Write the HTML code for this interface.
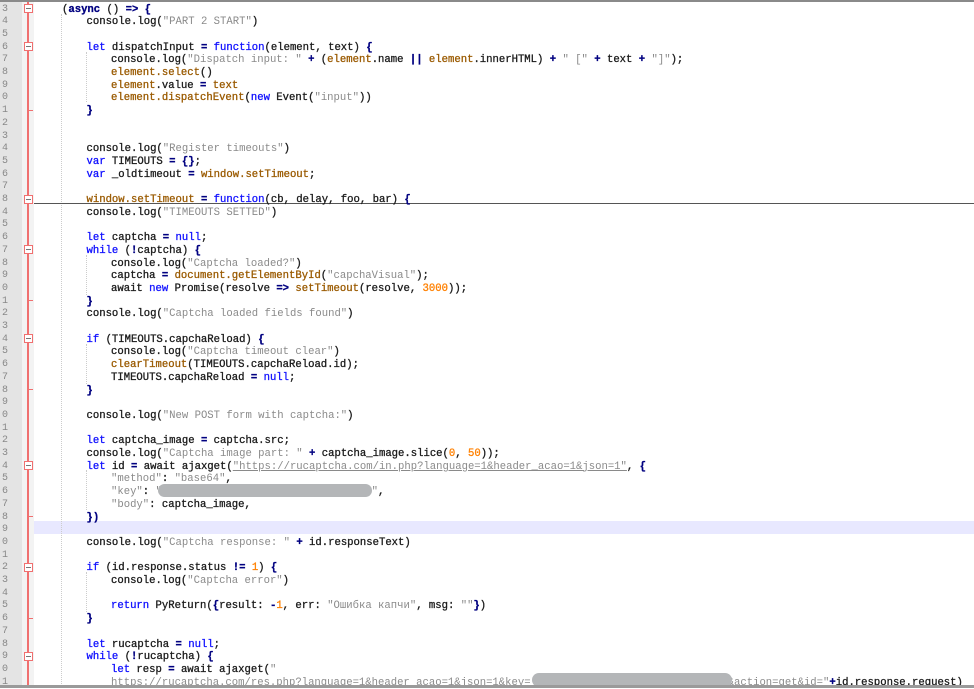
<!DOCTYPE html>
<html><head><meta charset="utf-8"><style>
body{margin:0;width:974px;height:688px;overflow:hidden;background:#fff;position:relative;font-family:"Liberation Mono",monospace;font-size:10.6px;}
#top{position:absolute;left:0;top:0;width:974px;height:2px;background:#8a8a8a}
#bot{position:absolute;left:0;top:685px;width:974px;height:3px;background:#9a9a9a}
#nums{position:absolute;left:0;top:0;width:22px;height:688px;background:#e4e4e4}
#fold{position:absolute;left:22px;top:0;width:12px;height:688px;background:#f3f3f3}
#red{position:absolute;left:27px;top:0;width:2px;height:688px;background:#f07070}
#hl{position:absolute;left:34px;top:521px;width:940px;height:13px;background:#e8e8ff}
#hr{position:absolute;left:34px;top:203px;width:940px;height:1px;background:#555}
.ln{position:absolute;left:0;width:20px;padding-left:2px;color:#888;height:12.7px;line-height:12.7px;font-size:10px}
.c{position:absolute;white-space:pre;height:12.7px;line-height:12.7px;color:#1a1a1a;font-weight:normal;-webkit-text-stroke:0.3px}
.k{color:#1010ff}.o{color:#000080;font-weight:bold}.s{color:#8a8a8a;-webkit-text-stroke:0}.n{color:#ff8000}.w{color:#9a5a00}.u{color:#8a8a8a;text-decoration:underline;-webkit-text-stroke:0}
.fb{position:absolute;left:24px;width:7px;height:7px;border:1px solid #f07070;background:#fff}
.fb::after{content:"";position:absolute;left:1px;top:3px;width:5px;height:1px;background:#777}
.fe{position:absolute;left:28px;width:5px;height:1px;background:#f07070}
.blur{position:absolute;background:#b4b6b8;border-radius:8px}
.g{position:absolute;width:0;border-left:1px dotted #ccc}
</style></head><body>
<div id="nums"></div><div id="fold"></div><div id="red"></div>
<div id="hl"></div>
<div class="g" style="left:61px;top:14px;height:670px"></div>
<div class="g" style="left:86px;top:52px;height:50px"></div>
<div class="g" style="left:86px;top:255px;height:40px"></div>
<div class="g" style="left:86px;top:344px;height:40px"></div>
<div class="g" style="left:86px;top:470px;height:40px"></div>
<div class="g" style="left:86px;top:572px;height:40px"></div>
<div id="hr"></div>
<div id="code"></div>
<script>
var L=[
[0,'(<span class="o">async</span> () <span class="o">=&gt;</span> <span class="o">{</span>'],
[1,'console.log(<span class="s">"PART 2 START"</span>)'],
[0,''],
[1,'<span class="k">let</span> dispatchInput <span class="o">=</span> <span class="k">function</span>(element, text) <span class="o">{</span>'],
[2,'console.log(<span class="s">"Dispatch input: "</span> <span class="o">+</span> (<span class="w">element</span>.name <span class="o">||</span> <span class="w">element</span>.innerHTML) <span class="o">+</span> <span class="s">" ["</span> <span class="o">+</span> text <span class="o">+</span> <span class="s">"]"</span>);'],
[2,'<span class="w">element.select</span>()'],
[2,'<span class="w">element</span>.value <span class="o">=</span> <span class="w">text</span>'],
[2,'<span class="w">element.dispatchEvent</span>(<span class="k">new</span> Event(<span class="s">"input"</span>))'],
[1,'<span class="o">}</span>'],
[0,''],[0,''],
[1,'console.log(<span class="s">"Register timeouts"</span>)'],
[1,'<span class="k">var</span> TIMEOUTS <span class="o">=</span> <span class="o">{}</span>;'],
[1,'<span class="k">var</span> _oldtimeout <span class="o">=</span> <span class="w">window.setTimeout</span>;'],
[0,''],
[1,'<span class="w">window.setTimeout</span> <span class="o">=</span> <span class="k">function</span>(cb, delay, foo, bar) <span class="o">{</span>'],
[1,'console.log(<span class="s">"TIMEOUTS SETTED"</span>)'],
[0,''],
[1,'<span class="k">let</span> captcha <span class="o">=</span> <span class="k">null</span>;'],
[1,'<span class="k">while</span> (<span class="o">!</span>captcha) <span class="o">{</span>'],
[2,'console.log(<span class="s">"Captcha loaded?"</span>)'],
[2,'captcha <span class="o">=</span> <span class="w">document.getElementById</span>(<span class="s">"capchaVisual"</span>);'],
[2,'await <span class="k">new</span> Promise(resolve <span class="o">=&gt;</span> <span class="w">setTimeout</span>(resolve, <span class="n">3000</span>));'],
[1,'<span class="o">}</span>'],
[1,'console.log(<span class="s">"Captcha loaded fields found"</span>)'],
[0,''],
[1,'<span class="k">if</span> (TIMEOUTS.capchaReload) <span class="o">{</span>'],
[2,'console.log(<span class="s">"Captcha timeout clear"</span>)'],
[2,'<span class="w">clearTimeout</span>(TIMEOUTS.capchaReload.id);'],
[2,'TIMEOUTS.capchaReload <span class="o">=</span> <span class="k">null</span>;'],
[1,'<span class="o">}</span>'],
[0,''],
[1,'console.log(<span class="s">"New POST form with captcha:"</span>)'],
[0,''],
[1,'<span class="k">let</span> captcha_image <span class="o">=</span> captcha.src;'],
[1,'console.log(<span class="s">"Captcha image part: "</span> <span class="o">+</span> captcha_image.slice(<span class="n">0</span>, <span class="n">50</span>));'],
[1,'<span class="k">let</span> id <span class="o">=</span> await ajaxget(<span class="u">"https://rucaptcha.com/in.php?language=1&amp;header_acao=1&amp;json=1"</span>, <span class="o">{</span>'],
[2,'<span class="s">"method"</span>: <span class="s">"base64"</span>,'],
[2,'<span class="s">"key"</span>: <span class="s">"                                 "</span>,'],
[2,'<span class="s">"body"</span>: captcha_image,'],
[1,'<span class="o">})</span>'],
[0,''],
[1,'console.log(<span class="s">"Captcha response: "</span> <span class="o">+</span> id.responseText)'],
[0,''],
[1,'<span class="k">if</span> (id.response.status <span class="o">!=</span> <span class="n">1</span>) <span class="o">{</span>'],
[2,'console.log(<span class="s">"Captcha error"</span>)'],
[0,''],
[2,'<span class="k">return</span> PyReturn(<span class="o">{</span>result: <span class="o">-</span><span class="n">1</span>, err: <span class="s">"Ошибка капчи"</span>, msg: <span class="s">""</span><span class="o">}</span>)'],
[1,'<span class="o">}</span>'],
[0,''],
[1,'<span class="k">let</span> rucaptcha <span class="o">=</span> <span class="k">null</span>;'],
[1,'<span class="k">while</span> (<span class="o">!</span>rucaptcha) <span class="o">{</span>'],
[2,'<span class="k">let</span> resp <span class="o">=</span> await ajaxget(<span class="s">"</span>'],
[2,'<span class="s">https://rucaptcha.com/res.php?language=1&amp;header_acao=1&amp;json=1&amp;key=                               &amp;action=get&amp;id="</span><span class="o">+</span>id.response.request)']
];
var h='',lh=12.7;
var fb=[0,3,15,19,26,36,44,51],fe=[8,23,30,40,48];
for(var i=0;i<L.length;i++){
 var t=2+i*lh;
 var num=i<16?(i+3)%10:(i+8)%10;
 h+='<div class="ln" style="top:'+(t+1.5)+'px">'+num+'</div>';
 h+='<div class="c" style="top:'+(t+1.5)+'px;left:'+(62+L[i][0]*24.5)+'px">'+L[i][1]+'</div>';
 if(fb.indexOf(i)>=0)h+='<div class="fb" style="top:'+(t+2)+'px"></div>';
 if(fe.indexOf(i)>=0)h+='<div class="fe" style="top:'+(t+6)+'px"></div>';
}
h+='<div class="blur" style="left:158px;top:484px;width:214px;height:13px"></div>';
h+='<div class="blur" style="left:532px;top:673px;width:200px;height:14px"></div>';
document.getElementById('code').innerHTML=h;
</script>
<div id="top"></div><div id="bot"></div>
</body></html>
